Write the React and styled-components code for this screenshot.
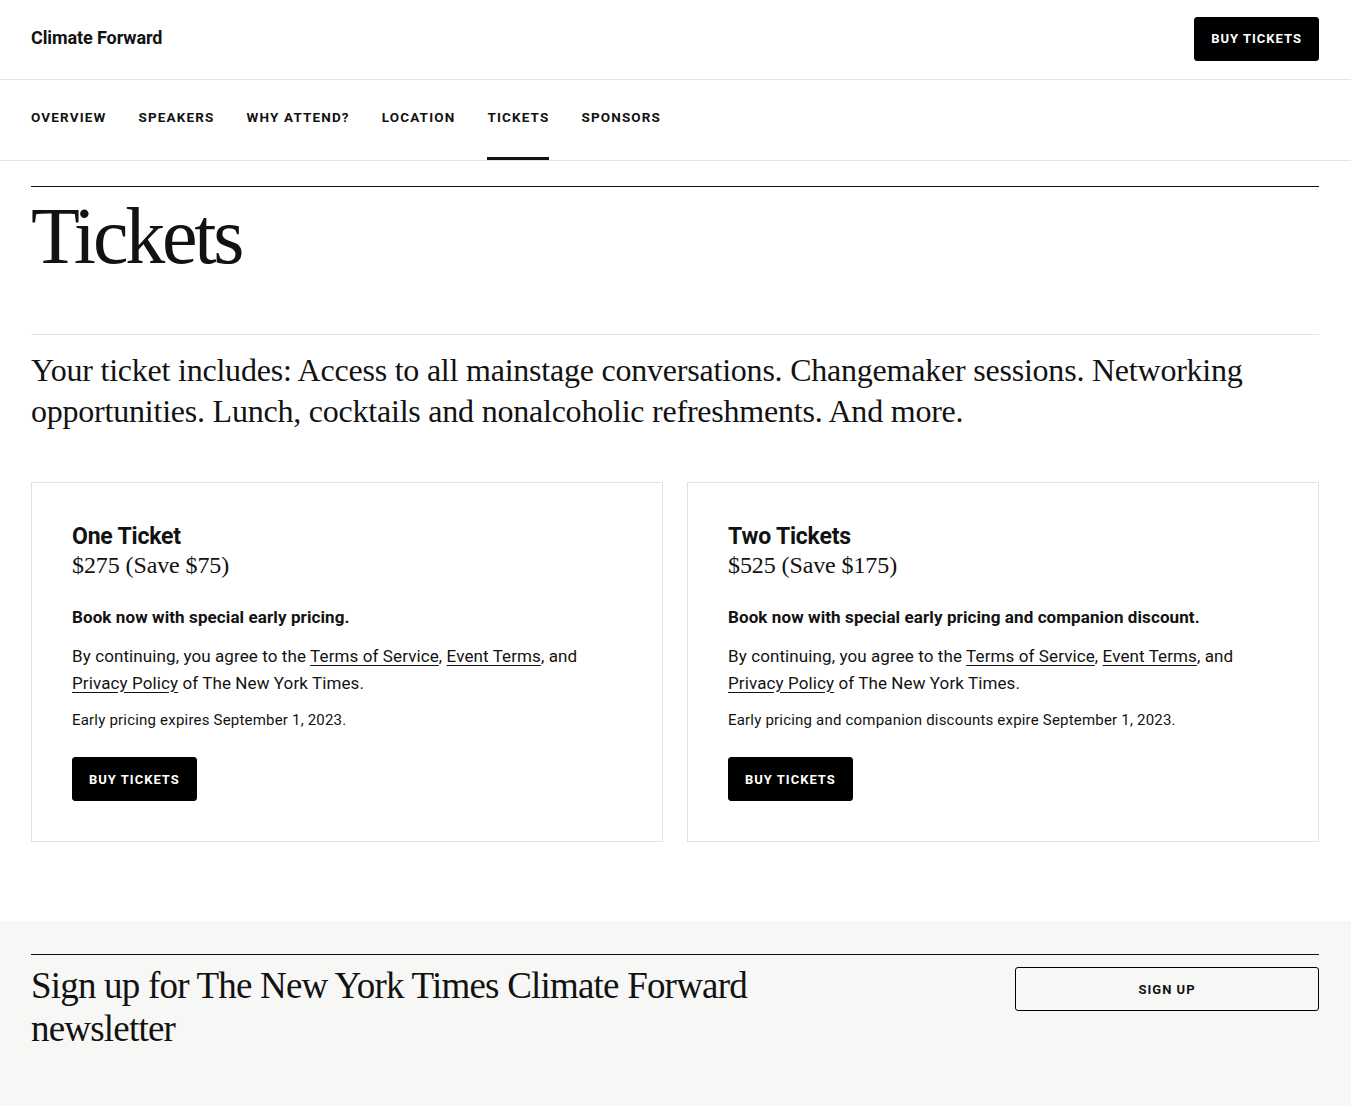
import React from 'react';
import styled, { createGlobalStyle } from 'styled-components';

const sans = `Roboto, "Liberation Sans", Arial, sans-serif`;
const serif = `"Liberation Serif", "DejaVu Serif", serif`;

const GlobalStyle = createGlobalStyle`
  * { box-sizing: border-box; }
  body {
    margin: 0;
    background: #fff;
    color: #121212;
    font-family: ${sans};
  }
`;

const TopBar = styled.header`
  height: 80px;
  border-bottom: 1px solid #e2e2e2;
  padding: 0 32px 2px 31px;
  display: flex;
  align-items: center;
  justify-content: space-between;
`;

const Brand = styled.div`
  font-family: ${sans};
  font-weight: 700;
  font-size: 18px;
  letter-spacing: -0.1px;
  color: #121212;
  margin-top: -2px;
`;

const Button = styled.button`
  height: 44px;
  padding: 0 16px;
  border-radius: 3px;
  font-family: ${sans};
  font-weight: 700;
  font-size: 13px;
  letter-spacing: 1px;
  text-transform: uppercase;
  cursor: pointer;
  background: ${(p) => (p.$outline ? 'transparent' : '#000')};
  color: ${(p) => (p.$outline ? '#121212' : '#fff')};
  border: 1px solid #000;
  width: ${(p) => p.$width || 'auto'};
`;

const Nav = styled.nav`
  height: 81px;
  border-bottom: 1px solid #e2e2e2;
  padding: 0 31px;
  display: flex;
  gap: 32px;
`;

const NavItem = styled.a`
  display: flex;
  align-items: center;
  height: 100%;
  font-family: ${sans};
  font-weight: 700;
  font-size: 13.5px;
  letter-spacing: 1.15px;
  text-transform: uppercase;
  color: #121212;
  text-decoration: none;
  border-bottom: 3px solid ${(p) => (p.$active ? '#121212' : 'transparent')};
  padding-bottom: 3px;
`;

const Main = styled.main`
  padding: 25px 32px 79px 31px;
`;

const TitleBlock = styled.div`
  border-top: 1px solid #121212;
  border-bottom: 1px solid #e2e2e2;
  padding-bottom: 49px;
`;

const PageTitle = styled.h1`
  margin: 0;
  font-family: ${serif};
  font-weight: 400;
  font-size: 80px;
  line-height: 98px;
  letter-spacing: -3.2px;
  color: #121212;
`;

const Intro = styled.p`
  margin: 15px 0 50px;
  font-family: ${serif};
  font-size: 32px;
  line-height: 41px;
  color: #121212;
  letter-spacing: -0.22px;
`;

const CardGrid = styled.div`
  display: grid;
  grid-template-columns: 1fr 1fr;
  gap: 24px;
`;

const Card = styled.section`
  border: 1px solid #e2e2e2;
  padding: 40px 40px 40px;
`;

const CardTitle = styled.h2`
  margin: 0;
  font-family: ${sans};
  font-weight: 700;
  font-size: 23px;
  line-height: 28px;
  letter-spacing: -0.2px;
`;

const Price = styled.div`
  font-family: ${serif};
  font-size: 24px;
  line-height: 28px;
  letter-spacing: -0.1px;
`;

const Lead = styled.p`
  margin: 26px 0 0;
  font-weight: 700;
  font-size: 17px;
  line-height: 24px;
  letter-spacing: 0.1px;
`;

const Body = styled.p`
  margin: 14px 0 0;
  font-size: 17px;
  line-height: 27px;
  letter-spacing: 0.1px;
  max-width: 540px;

  a {
    color: inherit;
    text-decoration: underline;
    text-underline-offset: 3px;
  }
`;

const Fine = styled.p`
  margin: 13px 0 27px;
  font-size: 15px;
  line-height: 20px;
  letter-spacing: 0.2px;
`;

const Footer = styled.footer`
  background: #f7f7f5;
  padding: 33px 32px 56px 31px;
`;

const FooterRow = styled.div`
  border-top: 1px solid #121212;
  padding-top: 12px;
  display: flex;
  justify-content: space-between;
  align-items: flex-start;
`;

const FooterHeading = styled.h2`
  margin: -3px 0 0;
  max-width: 780px;
  font-family: ${serif};
  font-weight: 400;
  font-size: 37px;
  line-height: 43px;
  letter-spacing: -0.8px;
  color: #121212;
`;

const tickets = [
  {
    title: 'One Ticket',
    price: '$275 (Save $75)',
    lead: 'Book now with special early pricing.',
    fine: 'Early pricing expires September 1, 2023.',
  },
  {
    title: 'Two Tickets',
    price: '$525 (Save $175)',
    lead: 'Book now with special early pricing and companion discount.',
    fine: 'Early pricing and companion discounts expire September 1, 2023.',
  },
];

const navItems = ['Overview', 'Speakers', 'Why Attend?', 'Location', 'Tickets', 'Sponsors'];

export default function App() {
  return (
    <>
      <GlobalStyle />
      <TopBar>
        <Brand>Climate Forward</Brand>
        <Button>Buy Tickets</Button>
      </TopBar>
      <Nav>
        {navItems.map((n) => (
          <NavItem key={n} href="#" $active={n === 'Tickets'}>{n}</NavItem>
        ))}
      </Nav>
      <Main>
        <TitleBlock>
          <PageTitle>Tickets</PageTitle>
        </TitleBlock>
        <Intro>
          Your ticket includes: Access to all mainstage conversations. Changemaker sessions. Networking
          opportunities. Lunch, cocktails and nonalcoholic refreshments. And more.
        </Intro>
        <CardGrid>
          {tickets.map((t) => (
            <Card key={t.title}>
              <CardTitle>{t.title}</CardTitle>
              <Price>{t.price}</Price>
              <Lead>{t.lead}</Lead>
              <Body>
                By continuing, you agree to the <a href="#">Terms of Service</a>,{' '}
                <a href="#">Event Terms</a>, and <a href="#">Privacy Policy</a> of The New York Times.
              </Body>
              <Fine>{t.fine}</Fine>
              <Button>Buy Tickets</Button>
            </Card>
          ))}
        </CardGrid>
      </Main>
      <Footer>
        <FooterRow>
          <FooterHeading>Sign up for The New York Times Climate Forward newsletter</FooterHeading>
          <Button $outline $width="304px">Sign Up</Button>
        </FooterRow>
      </Footer>
    </>
  );
}
